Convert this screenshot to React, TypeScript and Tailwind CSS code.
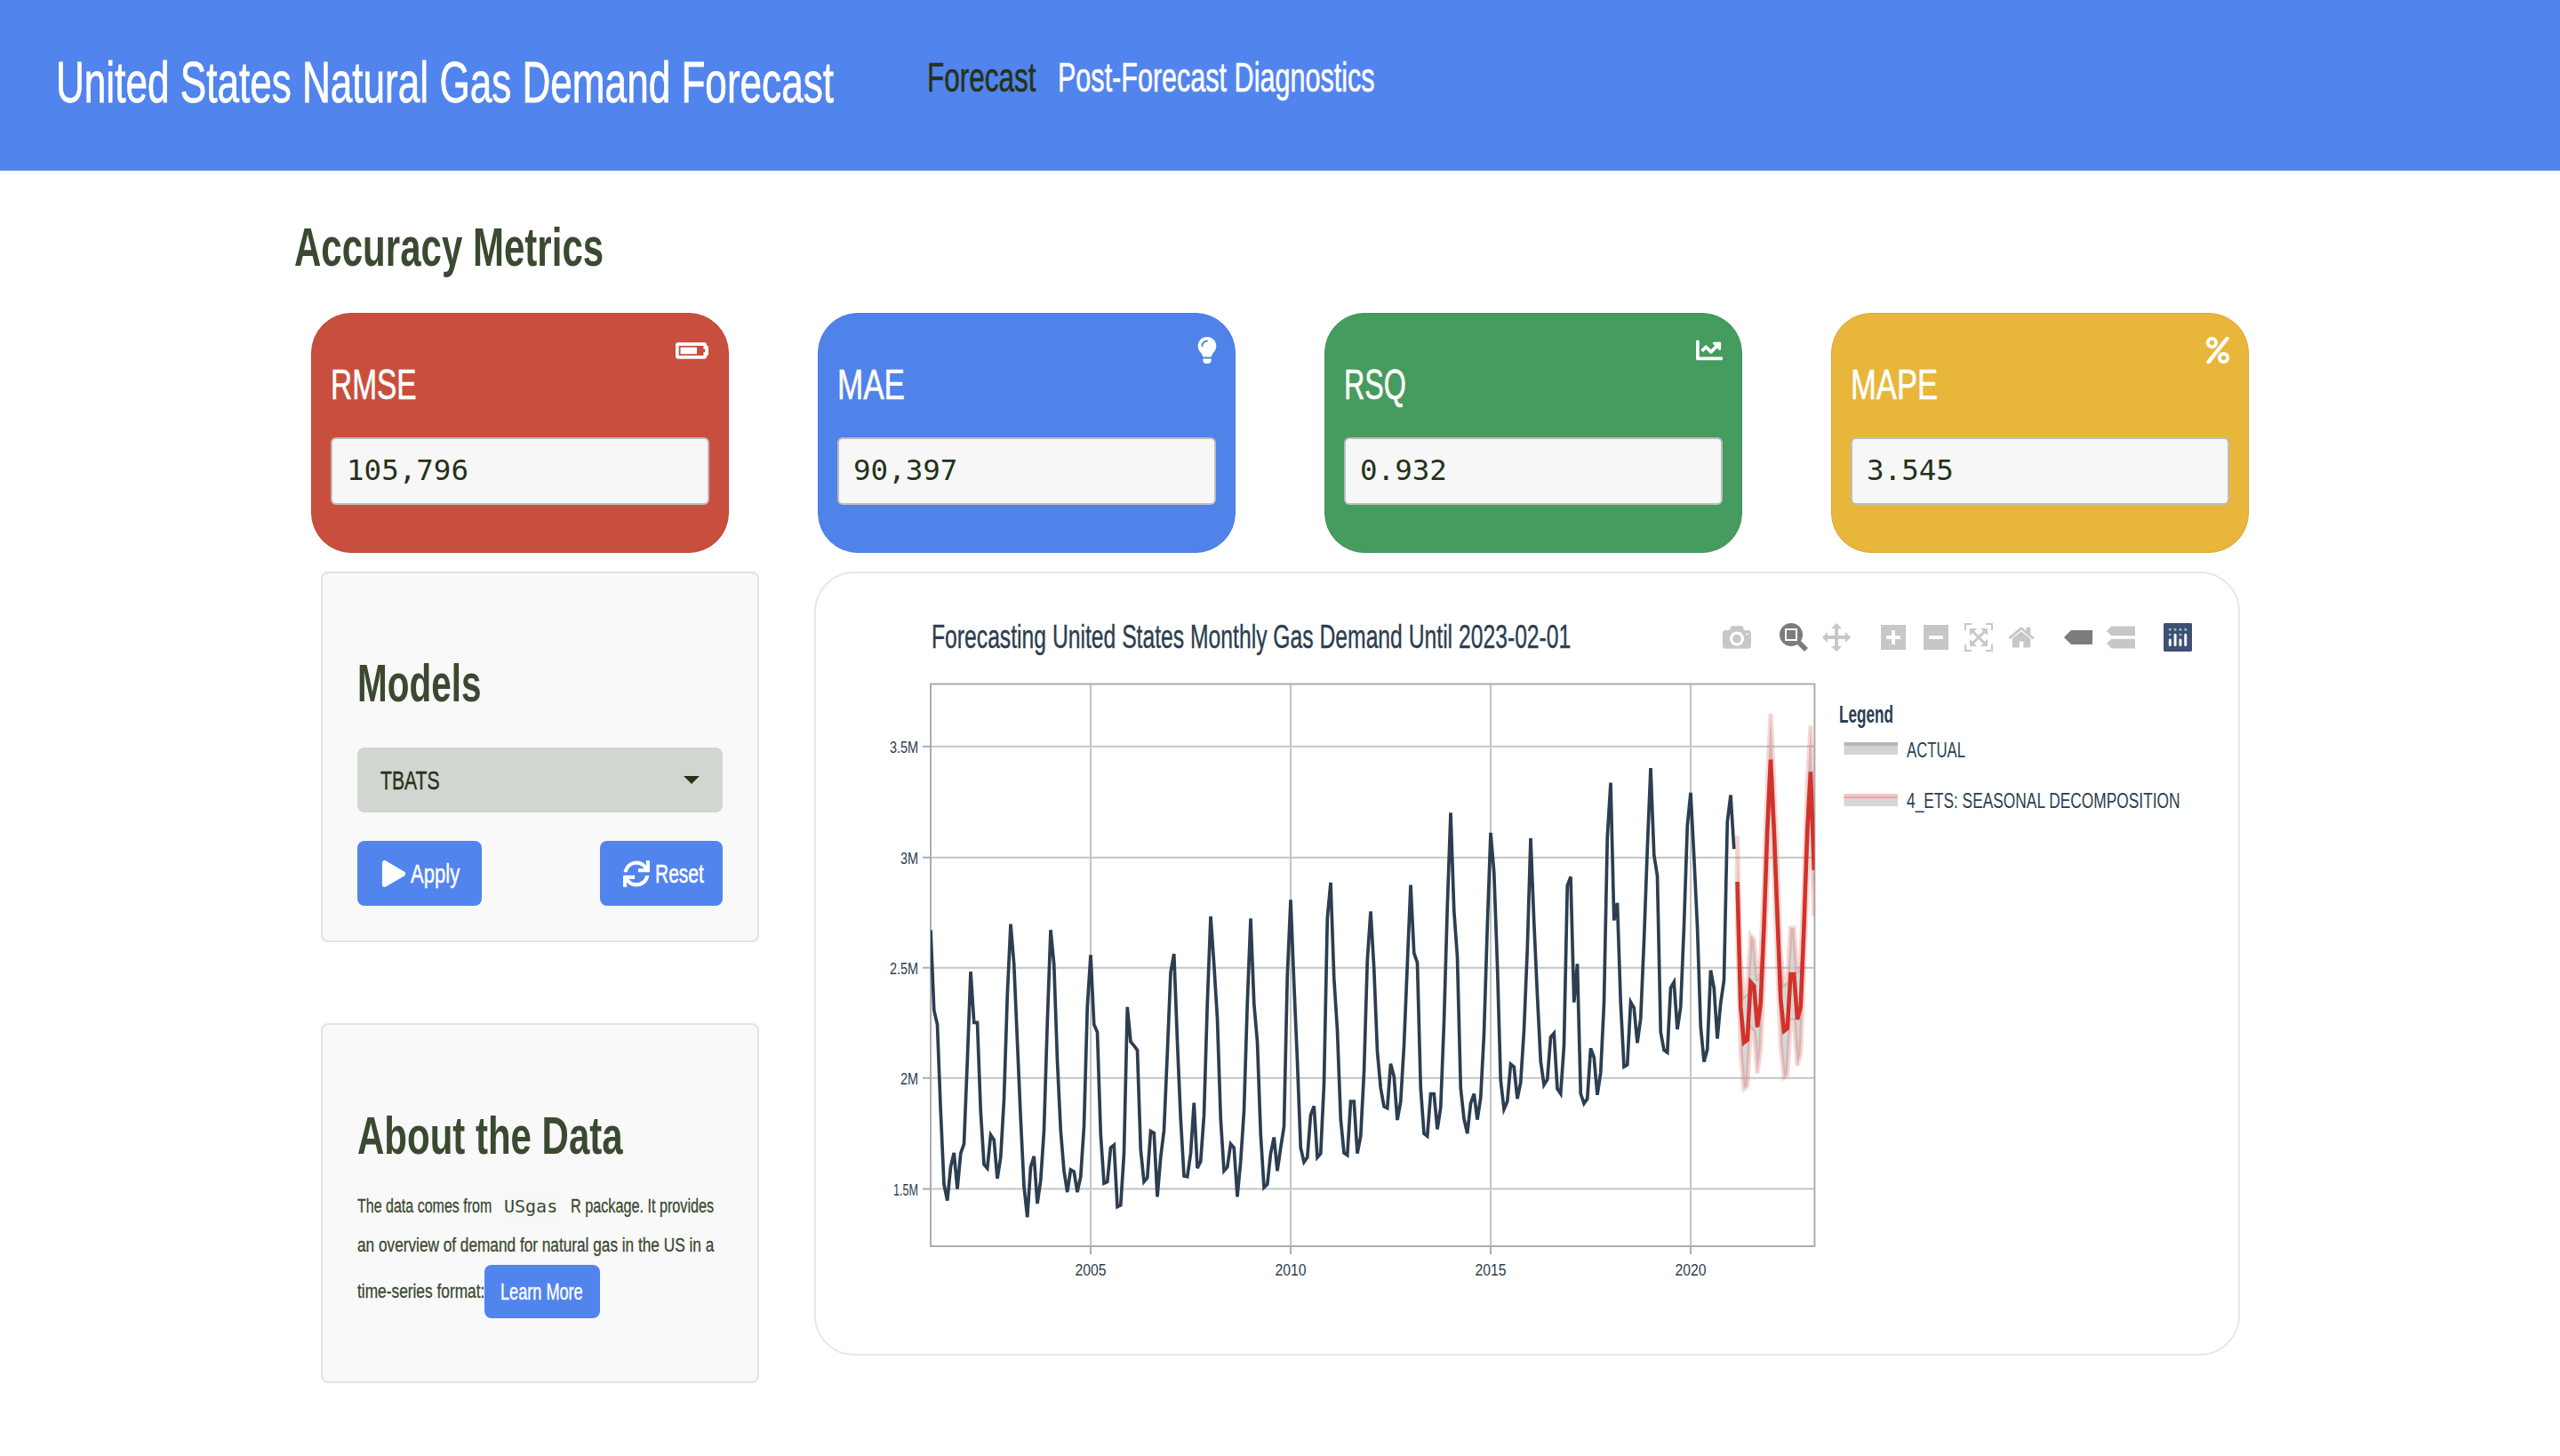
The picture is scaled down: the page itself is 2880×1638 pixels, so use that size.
import React from "react";
import { FaBatteryThreeQuarters, FaLightbulb, FaChartLine, FaPercent, FaPlay, FaSync } from "react-icons/fa";

const actualZ = [
  660,868,905,1130,1320,1362,1275,1238,1332,1240,1215,1000,
  768,900,900,1130,1268,1278,1192,1205,1305,1250,1100,830,
  645,750,950,1150,1325,1405,1275,1247,1370,1310,1180,900,
  660,750,1000,1180,1285,1340,1282,1287,1340,1300,1170,860,
  725,905,925,1190,1317,1313,1225,1218,1378,1374,1240,860,
  950,960,972,1230,1313,1303,1182,1187,1352,1250,1180,980,
  770,722,950,1150,1298,1300,1240,1108,1278,1260,1140,850,
  625,750,890,1150,1285,1275,1215,1225,1352,1260,1130,850,
  630,850,950,1190,1328,1320,1240,1198,1285,1225,1170,780,
  582,800,1000,1225,1262,1250,1140,1117,1250,1240,1060,630,
  537,785,920,1150,1238,1244,1105,1105,1240,1195,1030,740,
  612,760,975,1070,1118,1122,1007,1040,1153,1105,960,750,
  543,720,745,1070,1188,1195,1085,1085,1177,1120,900,600,
  356,610,730,1070,1150,1188,1110,1085,1152,1095,930,650,
  408,510,750,1050,1125,1105,1008,1015,1098,1055,920,710,
  422,640,830,1000,1062,1048,938,928,1072,1085,960,545,
  522,848,748,1085,1110,1098,967,990,1088,1030,850,420,
  278,635,590,850,1015,1010,847,862,953,890,690,450,
  240,465,520,925,972,978,810,795,918,860,650,390,
  304,470,650,910,1002,970,765,810,942,850,790,380,
  310,450,
];
const forecastZ = [535,860,952,945,795,805,912,850,650,400,218,400,620,840,922,915,775,775,892,860,650,400,250,505];

const px = (i: number) => 1047 + i * 3.75;
const py = (z: number) => 760 + z / 2.306;
const pts = (a: number[], o: number, d = 0) => a.map((z, i) => `${px(i + o).toFixed(2)},${py(z + d).toFixed(1)}`);

const actualPts = pts(actualZ, 0).join(" ");
const forecastPts = pts(forecastZ, 242).join(" ");
const upper = pts(forecastZ, 242, -120);
const lower = pts(forecastZ, 242, 120);
const bandPts = [...upper, ...[...lower].reverse()].join(" ");

const yTicks: [number, string, number][] = [[839.8, "3.5M", 32], [964.7, "3M", 20], [1088.7, "2.5M", 32], [1212.7, "2M", 20], [1337.6, "1.5M", 28]];
const xTicks: [number, string][] = [[1227, "2005"], [1452, "2010"], [1677, "2015"], [1902, "2020"]];

function T({ className, children }: { className: string; children: React.ReactNode }) {
  return <span className={"block shrink-0 origin-left whitespace-nowrap " + className}>{children}</span>;
}

function Metric({ name, nameClass, value, bg, icon }: { name: string; nameClass: string; value: string; bg: string; icon: React.ReactNode }) {
  return (
    <div className={"relative flex h-[270px] w-[470px] shrink-0 flex-col rounded-[45px] border px-[21px] pt-[56px] " + bg}>
      {icon}
      <T className={"text-[48px] leading-[48px] text-white [-webkit-text-stroke:0.6px_white] " + nameClass}>{name}</T>
      <div className="mt-[35px] flex h-[76px] w-[426px] items-center rounded-[6px] border-2 border-[#bdbdbd] bg-[#f7f7f7] pb-[2px] pl-[16px] font-['DejaVu_Sans_Mono',monospace] text-[32.5px] text-[#25331a]">
        {value}
      </div>
    </div>
  );
}

function ModeIcon({ w = 1000, d, color = "#c7c7c7" }: { w?: number; d: string; color?: string }) {
  return (
    <svg className="h-[32px] w-[32px] shrink-0" viewBox={`0 0 ${w} 1000`}>
      <path d={d} fill={color} transform="matrix(1 0 0 -1 0 850)" />
    </svg>
  );
}

function Toolbar() {
  return (
    <div className="flex shrink-0 gap-[32px]">
      <ModeIcon d="M500 450c-83 0-150-67-150-150 0-83 67-150 150-150 83 0 150 67 150 150 0 83-67 150-150 150z m400 150h-120c-16 0-34 13-39 29l-31 93c-6 15-23 28-40 28h-340c-16 0-34-13-39-28l-31-94c-6-15-23-28-40-28h-120c-55 0-100-45-100-100v-450c0-55 45-100 100-100h800c55 0 100 45 100 100v450c0 55-45 100-100 100z m-400-550c-138 0-250 112-250 250 0 138 112 250 250 250 138 0 250-112 250-250 0-138-112-250-250-250z m365 380c-19 0-35 16-35 35 0 19 16 35 35 35 19 0 35-16 35-35 0-19-16-35-35-35z" />
      <div className="flex gap-4">
        <ModeIcon color="#7c7c7c" d="m1000-25l-250 251c40 63 63 138 63 218 0 224-182 406-407 406-224 0-406-182-406-406s183-406 407-406c80 0 155 22 218 62l250-250 125 125z m-812 250l0 438 437 0 0-438-437 0z m62 375l313 0 0-312-313 0 0 312z" />
        <ModeIcon d="m1000 350l-187 188 0-125-250 0 0 250 125 0-188 187-187-187 125 0 0-250-250 0 0 125-188-188 186-187 0 125 252 0 0-250-125 0 187-188 188 188-125 0 0 250 250 0 0-126 187 188z" />
      </div>
      <div className="flex gap-4">
        <ModeIcon w={875} d="m1 787l0-875 875 0 0 875-875 0z m687-500l-187 0 0-187-125 0 0 187-188 0 0 125 188 0 0 187 125 0 0-187 187 0 0-125z" />
        <ModeIcon w={875} d="m0 788l0-876 875 0 0 876-875 0z m688-500l-500 0 0 125 500 0 0-125z" />
        <ModeIcon d="m250 850l-187 0-63 0 0-62 0-188 63 0 0 188 187 0 0 62z m688 0l-188 0 0-62 188 0 0-188 62 0 0 188 0 62-62 0z m-875-938l0 188-63 0 0-188 0-62 63 0 187 0 0 62-187 0z m875 188l0-188-188 0 0-62 188 0 62 0 0 62 0 188-62 0z m-125 188l-1 0-93-94-156 156 156 156 92-93 2 0 0 250-250 0 0-2 93-92-156-156-156 156 94 92 0 2-250 0 0-250 0 0 93 93 157-156-157-156-93 94 0 0 0-250 250 0 0 0-94 93 156 157 156-157-93-93 0 0 250 0 0 250z" />
        <ModeIcon w={928.6} d="m786 296v-267q0-15-11-26t-25-10h-214v214h-143v-214h-214q-15 0-25 10t-11 26v267q0 1 0 2t0 2l321 264 321-264q1-1 1-4z m124 39l-34-41q-5-5-12-6h-2q-7 0-12 3l-386 322-386-322q-7-4-13-4-7 2-12 7l-35 41q-4 5-3 13t6 12l401 334q18 15 42 15t43-15l136-114v109q0 8 5 13t13 5h107q8 0 13-5t5-13v-227l122-102q5-5 6-12t-4-13z" />
      </div>
      <div className="flex gap-4">
        <ModeIcon w={1500} color="#7c7c7c" d="m375 725l0 0-375-375 375-374 0-1 1125 0 0 750-1125 0z" />
        <ModeIcon w={1125} d="m187 786l0 2-187-188 188-187 0 0 937 0 0 373-938 0z m0-499l0 1-187-188 188-188 0 0 937 0 0 376-938-1z" />
      </div>
      <svg className="h-[32px] w-[32px] shrink-0" viewBox="0 0 132 132">
        <rect width="132" height="132" rx="6" ry="6" fill="#3f4f75" />
        {[[78, 54], [102, 30], [78, 30], [54, 30], [30, 30], [30, 54]].map(([cx, cy]) => (
          <circle key={`${cx}-${cy}`} cx={cx} cy={cy} r="6" fill="#80cfbe" />
        ))}
        <path fill="#fff" d="M30,72a6,6,0,0,0-6,6v24a6,6,0,0,0,12,0V78A6,6,0,0,0,30,72Z M78,72a6,6,0,0,0-6,6v24a6,6,0,0,0,12,0V78A6,6,0,0,0,78,72Z M54,48a6,6,0,0,0-6,6v48a6,6,0,0,0,12,0V54A6,6,0,0,0,54,48Z M102,48a6,6,0,0,0-6,6v48a6,6,0,0,0,12,0V54A6,6,0,0,0,102,48Z" />
      </svg>
    </div>
  );
}

function Chart() {
  const tick = { fontSize: 19, fill: "#2c3e50", lengthAdjust: "spacingAndGlyphs" as const };
  return (
    <svg className="ml-[62px] mt-[17px] block h-[690px] w-[1500px]" viewBox="980 750 1500 690">
      <defs>
        <clipPath id="plot">
          <rect x="1047" y="769.5" width="994.4" height="632.5" />
        </clipPath>
      </defs>
      <g stroke="#c4c5c7" strokeWidth="2">
        {yTicks.map(([y]) => (
          <line key={y} x1="1047" x2="2041" y1={y} y2={y} />
        ))}
        {xTicks.map(([x]) => (
          <line key={x} x1={x} x2={x} y1="769" y2="1402" />
        ))}
      </g>
      <g stroke="#a9aeb4" strokeWidth="2">
        {yTicks.map(([y]) => (
          <line key={y} x1="1038" x2="1047" y1={y} y2={y} />
        ))}
        {xTicks.map(([x]) => (
          <line key={x} x1={x} x2={x} y1="1402" y2="1411" />
        ))}
      </g>
      <rect x="1047" y="769.5" width="994.4" height="632.5" fill="none" stroke="#a9aeb4" strokeWidth="2" />
      <g clipPath="url(#plot)">
        <polygon points={bandPts} fill="#c8c8c8" fillOpacity="0.75" stroke="#d63228" strokeOpacity="0.2" strokeWidth="5" strokeLinejoin="miter" />
        <polyline points={actualPts} fill="none" stroke="#2c3e50" strokeWidth="3.7" strokeLinejoin="miter" />
        <polyline points={forecastPts} fill="none" stroke="#d2322a" strokeWidth="4.6" strokeLinejoin="miter" />
      </g>
      {yTicks.map(([y, s, w]) => (
        <text key={s} x={1033 - w} y={y + 7} textLength={w} {...tick}>{s}</text>
      ))}
      {xTicks.map(([x, s]) => (
        <text key={s} x={x - 17.5} y="1435" textLength="35" {...tick}>{s}</text>
      ))}
      <text x="2069" y="813" fontSize="28" fill="#2c3e50" fontWeight="bold" textLength="61" lengthAdjust="spacingAndGlyphs">Legend</text>
      <rect x="2074.5" y="835" width="60.5" height="14" fill="#d4d4d4" />
      <rect x="2074.5" y="835" width="60.5" height="4" fill="#b5b7ba" />
      <text x="2145" y="852" fontSize="24" fill="#2c3e50" textLength="66" lengthAdjust="spacingAndGlyphs">ACTUAL</text>
      <rect x="2074.5" y="893" width="60.5" height="14" fill="#d6d6d6" />
      <rect x="2074.5" y="893" width="60.5" height="6" fill="#f2c8c8" />
      <rect x="2074.5" y="896" width="60.5" height="2" fill="#dcabab" />
      <text transform="translate(2145 909) scale(0.7227 1)" fontSize="24" fill="#2c3e50">4_ETS: SEASONAL DECOMPOSITION</text>
    </svg>
  );
}

export default function App() {
  return (
    <div className="min-h-[1638px] bg-white pb-[80px] font-['Liberation_Sans',sans-serif]">
      <header className="flex h-[192px] items-start bg-[#5284ee] pl-[63px]">
        <T className="mt-[61px] w-[878px] scale-x-[0.689] text-[64px] leading-[64px] text-white [-webkit-text-stroke:0.8px_white]">United States Natural Gas Demand Forecast</T>
        <T className="ml-[102px] mt-[64px] w-[125px] scale-x-[0.685] text-[46px] leading-[46px] text-[#25331a] [-webkit-text-stroke:0.6px_#25331a]">Forecast</T>
        <T className="ml-[22px] mt-[64px] w-[356px] scale-x-[0.664] text-[46px] leading-[46px] text-white [-webkit-text-stroke:0.6px_white]">Post-Forecast Diagnostics</T>
      </header>

      <main className="pl-[331px]">
        <T className="mt-[55px] w-[348px] scale-x-[0.678] text-[62px] font-bold leading-[62px] text-[#3a4a30]">Accuracy Metrics</T>

        <div className="ml-[19px] mt-[43px] flex gap-[100px]">
          <Metric name="RMSE" nameClass="scale-x-[0.697]" value="105,796" bg="border-[#bd4a3a] bg-[#c84f3e]"
            icon={<FaBatteryThreeQuarters size={37} className="absolute right-[22px] top-[23px] text-white" />} />
          <Metric name="MAE" nameClass="scale-x-[0.73]" value="90,397" bg="border-[#4a7cdf] bg-[#4f83ea]"
            icon={<FaLightbulb size={30} className="absolute right-[16px] top-[26px] text-white" />} />
          <Metric name="RSQ" nameClass="scale-x-[0.672]" value="0.932" bg="border-[#42925a] bg-[#469b5f]"
            icon={<FaChartLine size={30} className="absolute right-[21px] top-[26px] text-white" />} />
          <Metric name="MAPE" nameClass="scale-x-[0.722]" value="3.545" bg="border-[#d9a835] bg-[#e8b63b]"
            icon={<FaPercent size={30} className="absolute right-[19px] top-[26px] text-white" />} />
        </div>

        <div className="ml-[30px] mt-[21px] flex gap-[62px]">
          <aside className="flex w-[493px] shrink-0 flex-col gap-[91px]">
            <section className="h-[417px] rounded-[8px] border-2 border-[#e3e3df] bg-[#f9f9f9] pl-[39px] pt-[94px]">
              <T className="w-[138px] scale-x-[0.675] text-[60px] font-bold leading-[60px] text-[#3a4a30]">Models</T>
              <div className="mt-[42px] flex h-[73px] w-[411px] items-center justify-between rounded-[8px] bg-[#d2d6d0] pl-[26px] pr-[26px]">
                <T className="w-[68px] scale-x-[0.705] text-[30px] text-[#25331a] [-webkit-text-stroke:0.4px_#25331a]">TBATS</T>
                <svg className="h-[9px] w-[18px]" viewBox="0 0 18 9">
                  <polygon points="0,0 18,0 9,9" fill="#25331a" />
                </svg>
              </div>
              <div className="mt-[32px] flex w-[411px] justify-between">
                <div className="flex h-[73px] w-[140px] items-center gap-[4px] rounded-[8px] bg-[#5284ee] pl-[26px] text-white">
                  <FaPlay size={30} className="shrink-0" />
                  <T className="w-[54px] scale-x-[0.735] text-[30px] [-webkit-text-stroke:0.5px_white]">Apply</T>
                </div>
                <div className="flex h-[73px] w-[138px] items-center gap-[6px] rounded-[8px] bg-[#5284ee] pl-[26px] text-white">
                  <FaSync size={30} className="shrink-0" />
                  <T className="w-[57px] scale-x-[0.70] text-[30px] [-webkit-text-stroke:0.5px_white]">Reset</T>
                </div>
              </div>
            </section>

            <section className="h-[405px] rounded-[8px] border-2 border-[#e3e3df] bg-[#f9f9f9] pl-[39px] pt-[95px]">
              <T className="w-[296px] scale-x-[0.70] text-[60px] font-bold leading-[60px] text-[#3a4a30]">About the Data</T>
              <div className="mt-[27px] text-[22px] leading-[44px] text-[#3a4a30] [-webkit-text-stroke:0.3px_#3a4a30]">
                <div className="flex items-center">
                  <T className="w-[151px] scale-x-[0.728]">The data comes from</T>
                  <code className="ml-[14px] w-[61px] bg-[#f8f8f8] font-['DejaVu_Sans_Mono',monospace] text-[20px] [-webkit-text-stroke:0]">USgas</code>
                  <T className="ml-[14px] w-[161px] scale-x-[0.736]">R package. It provides</T>
                </div>
                <T className="w-[384px] scale-x-[0.783]">an overview of demand for natural gas in the US in a</T>
                <div className="flex items-center">
                  <T className="w-[138px] scale-x-[0.787]">time-series format:</T>
                  <div className="ml-[5px] flex h-[60px] w-[130px] items-center rounded-[8px] bg-[#5284ee] pl-[18px] text-white [-webkit-text-stroke:0]">
                    <T className="w-[93px] scale-x-[0.697] text-[26px] leading-[26px] [-webkit-text-stroke:0.4px_white]">Learn More</T>
                  </div>
                </div>
              </div>
            </section>
          </aside>

          <section className="h-[882px] w-[1604px] shrink-0 rounded-[45px] border-2 border-[#e8e8e4] bg-white pt-[56px]">
            <div className="flex h-[32px] items-center justify-between pl-[130px] pr-[52px]">
              <T className="w-[719px] scale-x-[0.686] text-[36px] leading-[36px] text-[#2c3e50] [-webkit-text-stroke:0.4px_#2c3e50]">Forecasting United States Monthly Gas Demand Until 2023-02-01</T>
              <Toolbar />
            </div>
            <Chart />
          </section>
        </div>
      </main>
    </div>
  );
}
